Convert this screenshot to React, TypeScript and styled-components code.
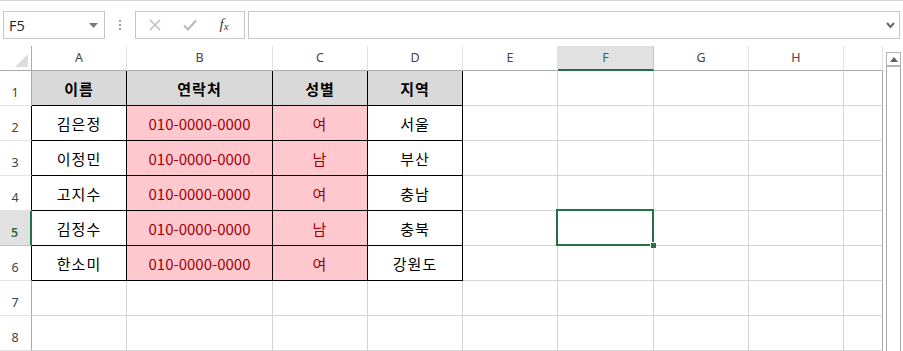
import React from "react";
import styled, { createGlobalStyle, css } from "styled-components";

const GlobalStyle = createGlobalStyle`
    html, body {
        margin: 0;
        padding: 0;
        background: #fff;
    }
    body {
        width: 903px;
        height: 351px;
        overflow: hidden;
        font-family: "Noto Sans", "Liberation Sans", sans-serif;
    }
`;

const GREEN = "#217346";
const GRID_LINE = "#d4d4d4";
const HEAD_LINE = "#ababab";

const columns = [
    { label: "A", width: 95 },
    { label: "B", width: 146 },
    { label: "C", width: 95 },
    { label: "D", width: 95 },
    { label: "E", width: 95 },
    { label: "F", width: 96 },
    { label: "G", width: 95 },
    { label: "H", width: 95 },
    { label: "", width: 39 },
];

const tableHead = ["이름", "연락처", "성별", "지역"];
const tableRows = [
    ["김은정", "010-0000-0000", "여", "서울"],
    ["이정민", "010-0000-0000", "남", "부산"],
    ["고지수", "010-0000-0000", "여", "충남"],
    ["김정수", "010-0000-0000", "남", "충북"],
    ["한소미", "010-0000-0000", "여", "강원도"],
];

const ROW_COUNT = 8;
const ACTIVE_COL = 5; // F
const ACTIVE_ROW = 5;

export default function App() {
    const cellsFor = (row: number) =>
        columns.map((col, c) => {
            const inTable = c < 4 && row <= 6;
            const isHead = inTable && row === 1;
            const isPink = inTable && !isHead && (c === 1 || c === 2);
            let text = "";
            if (isHead) text = tableHead[c];
            else if (inTable) text = tableRows[row - 2][c];
            const active = row === ACTIVE_ROW && c === ACTIVE_COL;
            return (
                <Cell
                    key={`${row}-${c}`}
                    $fill={isHead ? "#d9d9d9" : isPink ? "#ffc7ce" : "#fff"}
                    $color={isPink ? "#9c0006" : "#000"}
                    $bold={isHead}
                    $spaced={!/\d/.test(text)}
                    $line={inTable ? "#000" : GRID_LINE}
                    $last={c === columns.length - 1}
                >
                    {text}
                    {active && (
                        <Selection>
                            <FillHandle />
                        </Selection>
                    )}
                </Cell>
            );
        });

    return (
        <>
            <GlobalStyle />
            <Window>
                <FormulaBar>
                    <NameBox>
                        <span>F5</span>
                        <svg width="9" height="5" viewBox="0 0 9 5">
                            <path d="M0 0 H9 L4.5 5 Z" fill="#7a7a7a" />
                        </svg>
                    </NameBox>
                    <Grip>
                        <i />
                        <i />
                        <i />
                    </Grip>
                    <FxButtons>
                        <FxIcon>
                            <svg width="12" height="12" viewBox="0 0 12 12">
                                <path d="M1 1 L11 11 M11 1 L1 11" stroke="#b9b9b9" strokeWidth="1.4" />
                            </svg>
                        </FxIcon>
                        <FxIcon>
                            <svg width="14" height="12" viewBox="0 0 14 12">
                                <path d="M1 6.5 L5 10.5 L13 1.5" stroke="#b9b9b9" strokeWidth="2" fill="none" />
                            </svg>
                        </FxIcon>
                        <FxText>
                            f<sub>x</sub>
                        </FxText>
                    </FxButtons>
                    <FormulaInput>
                        <svg width="9" height="7" viewBox="0 0 9 7">
                            <path d="M1 1 L4.5 5 L8 1" stroke="#666" strokeWidth="2" fill="none" />
                        </svg>
                    </FormulaInput>
                </FormulaBar>

                <SheetArea>
                    <Grid $cols={columns.map((c) => `${c.width}px`).join(" ")}>
                        <Corner>
                            <svg width="13" height="13" viewBox="0 0 13 13">
                                <path d="M13 0 V13 H0 Z" fill="#dcdcdc" />
                            </svg>
                        </Corner>
                        {columns.map((col, c) => (
                            <ColHeader key={col.label || "I"} $active={c === ACTIVE_COL}>
                                {col.label}
                            </ColHeader>
                        ))}
                        {Array.from({ length: ROW_COUNT }, (_, i) => i + 1).map((row) => (
                            <React.Fragment key={row}>
                                <RowHeader
                                    $active={row === ACTIVE_ROW}
                                    $edge={row >= 2 && row <= 6 ? "#000" : HEAD_LINE}
                                >
                                    {row}
                                </RowHeader>
                                {cellsFor(row)}
                            </React.Fragment>
                        ))}
                    </Grid>
                    <Scrollbar>
                        <ScrollArrow>
                            <svg width="8" height="5" viewBox="0 0 8 5">
                                <path d="M0 5 L4 0 L8 5 Z" fill="#606060" />
                            </svg>
                        </ScrollArrow>
                        <ScrollTrack />
                    </Scrollbar>
                </SheetArea>
            </Window>
        </>
    );
}

const Window = styled.div`
    width: 903px;
    height: 351px;
    display: flex;
    flex-direction: column;
    border-top: 1px solid #d6d6d6;
    box-sizing: border-box;
`;

const FormulaBar = styled.div`
    display: flex;
    align-items: stretch;
    height: 28px;
    margin: 10px 3px 7px 3px;
`;

const boxed = css`
    box-sizing: border-box;
    border: 1px solid #c6c6c6;
    background: #fff;
`;

const NameBox = styled.div`
    ${boxed};
    width: 102px;
    display: flex;
    align-items: center;
    justify-content: space-between;
    padding: 0 6px 0 5px;
    font-family: "Open Sans", "Noto Sans", sans-serif;
    font-size: 14.5px;
    color: #222;

    svg {
        margin-top: 1px;
    }
`;

const Grip = styled.div`
    width: 30px;
    display: flex;
    flex-direction: column;
    align-items: center;
    justify-content: center;
    gap: 2px;

    i {
        display: block;
        width: 2px;
        height: 2px;
        background: #a0a0a0;
    }
`;

const FxButtons = styled.div`
    ${boxed};
    width: 110px;
    display: grid;
    grid-template-columns: 35px 36px 1fr;
    align-items: center;
    justify-items: center;
    padding: 0 4px 0 1px;
`;

const FxIcon = styled.span`
    display: flex;
    align-items: center;
    justify-content: center;
`;

const FxText = styled.span`
    font-family: "Liberation Serif", "DejaVu Serif", serif;
    font-style: italic;
    font-size: 15px;
    color: #444;
    line-height: 1;
    margin-top: -2px;

    sub {
        font-size: 11px;
        vertical-align: -1px;
    }
`;

const FormulaInput = styled.div`
    ${boxed};
    flex: 1;
    margin-left: 3px;
    display: flex;
    align-items: center;
    justify-content: flex-end;
    padding-right: 4px;
`;

const SheetArea = styled.div`
    display: flex;
    flex: 1;
`;

const Grid = styled.div<{ $cols: string }>`
    display: grid;
    grid-template-columns: 32px ${(p) => p.$cols};
    grid-template-rows: 25px repeat(${ROW_COUNT}, 35px);
    width: 883px;
`;

const Corner = styled.div`
    box-sizing: border-box;
    border-right: 1px solid ${HEAD_LINE};
    border-bottom: 1px solid ${HEAD_LINE};
    display: flex;
    align-items: flex-end;
    justify-content: flex-end;
    padding: 0 3px 3px 0;
`;

const ColHeader = styled.div<{ $active: boolean }>`
    box-sizing: border-box;
    display: flex;
    align-items: center;
    justify-content: center;
    padding-bottom: 1px;
    font-size: 12.5px;
    color: ${(p) => (p.$active ? GREEN : "#444")};
    background: ${(p) => (p.$active ? "#e1e1e1" : "#fff")};
    border-right: 1px solid ${(p) => (p.$active ? "#c6c6c6" : "#e3e3e3")};
    border-bottom: ${(p) => (p.$active ? `2px solid ${GREEN}` : `1px solid ${HEAD_LINE}`)};
`;

const RowHeader = styled.div<{ $active: boolean; $edge: string }>`
    box-sizing: border-box;
    display: flex;
    align-items: flex-end;
    justify-content: center;
    padding: 0 1px 4px 0;
    font-size: 12.5px;
    font-weight: ${(p) => (p.$active ? 600 : 400)};
    color: ${(p) => (p.$active ? GREEN : "#444")};
    background: ${(p) => (p.$active ? "#e1e1e1" : "#fff")};
    border-bottom: 1px solid ${(p) => (p.$active ? "#c6c6c6" : "#e3e3e3")};
    border-right: ${(p) => (p.$active ? `2px solid ${GREEN}` : `1px solid ${p.$edge}`)};
`;

const Cell = styled.div<{
    $fill: string;
    $color: string;
    $bold: boolean;
    $spaced: boolean;
    $line: string;
    $last: boolean;
}>`
    position: relative;
    box-sizing: border-box;
    display: flex;
    align-items: center;
    justify-content: center;
    padding-top: 1px;
    font-family: "Noto Sans CJK KR", "Noto Sans", sans-serif;
    font-size: 15px;
    font-weight: ${(p) => (p.$bold ? 700 : 400)};
    letter-spacing: ${(p) => (p.$spaced ? "1px" : "0")};
    color: ${(p) => p.$color};
    background: ${(p) => p.$fill};
    border-right: 1px solid ${(p) => (p.$last ? "#a6a6a6" : p.$line)};
    border-bottom: 1px solid ${(p) => p.$line};
`;

const Selection = styled.div`
    position: absolute;
    z-index: 2;
    top: -2px;
    left: -2px;
    right: -1px;
    bottom: -1px;
    border: 2px solid ${GREEN};
    pointer-events: none;
`;

const FillHandle = styled.div`
    position: absolute;
    right: -4px;
    bottom: -4px;
    width: 5px;
    height: 5px;
    background: ${GREEN};
    border-left: 1px solid #fff;
    border-top: 1px solid #fff;
`;

const Scrollbar = styled.div`
    display: flex;
    flex-direction: column;
    width: 15px;
    margin: 6px 0 0 3px;
`;

const ScrollArrow = styled.div`
    box-sizing: border-box;
    height: 15px;
    border: 1px solid #b4b4b4;
    border-bottom: 2px solid #b4b4b4;
    display: flex;
    align-items: center;
    justify-content: center;
`;

const ScrollTrack = styled.div`
    flex: 1;
    border-left: 1px solid #a8a8a8;
    border-right: 1px solid #a8a8a8;
`;
